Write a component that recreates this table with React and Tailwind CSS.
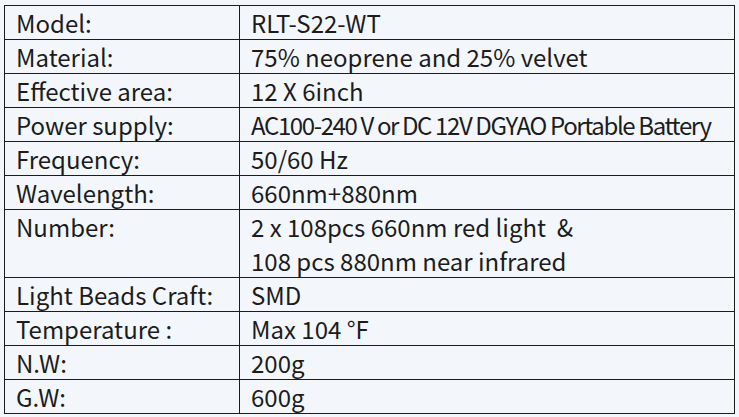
const rows = [
  ['Model:', ['RLT-S22-WT']],
  ['Material:', ['75% neoprene and 25% velvet']],
  ['Effective area:', ['12 X 6inch']],
  ['Power supply:', ['AC100-240 V or DC 12V DGYAO Portable Battery'], true],
  ['Frequency:', ['50/60 Hz']],
  ['Wavelength:', ['660nm+880nm']],
  ['Number:', ['2 x 108pcs 660nm red light  &', '108 pcs 880nm near infrared']],
  ['Light Beads Craft:', ['SMD']],
  ['Temperature :', ['Max 104 °F']],
  ['N.W:', ['200g']],
  ['G.W:', ['600g']],
];

export default function App() {
  return (
    <div
      className="w-[739px] h-[417px] bg-[#f3f7fc] pt-[5px] pl-[4px] text-[#1c1c1c]"
      style={{ fontFamily: '"Noto Sans CJK SC", "Noto Sans", sans-serif' }}
    >
      <table className="border-collapse w-[731px] text-[24px]">
        <tbody>
          {rows.map(([label, lines, tight]) => (
            <tr key={label}>
              <td className="border border-[#1c1c1c] w-[235px] pl-[11px] align-top leading-[33px] whitespace-pre">
                {label}
              </td>
              <td
                className={`border border-[#1c1c1c] pl-[11px] align-top leading-[33px] whitespace-pre ${
                  tight ? 'tracking-[-1.38px]' : ''
                }`}
              >
                {lines.map((l) => (
                  <div key={l} className={lines.length > 1 ? 'h-[33.5px]' : ''}>
                    {l}
                  </div>
                ))}
              </td>
            </tr>
          ))}
        </tbody>
      </table>
    </div>
  );
}
